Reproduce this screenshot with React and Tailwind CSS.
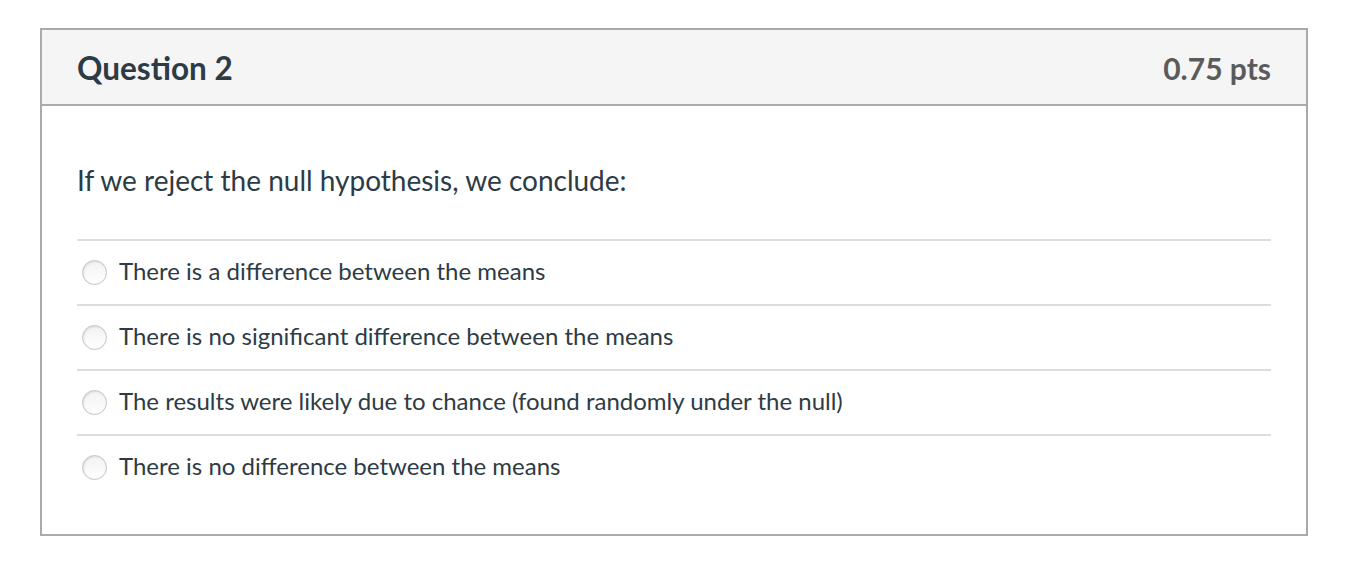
import React from "react"

const answers = [
  "There is a difference between the means",
  "There is no significant difference between the means",
  "The results were likely due to chance (found randomly under the null)",
  "There is no difference between the means",
]

function Radio() {
  return (
    <span className="block w-[25px] h-[25px] rounded-full border border-[#c4c4c4] bg-gradient-to-b from-[#f2f2f2] to-white shadow-[inset_1px_1px_2px_rgba(0,0,0,0.1)] shrink-0" />
  )
}

export default function App() {
  return (
    <div className="min-h-screen bg-white pt-[28px] pl-[40px]" style={{ fontFamily: "Lato, 'Open Sans', sans-serif" }}>
      <div className="w-[1268px] border-2 border-[#aaaaaa]">
        {/* Header */}
        <div className="h-[76px] bg-[#f5f5f5] border-b-2 border-[#aaaaaa] px-[35px] flex items-center justify-between">
          <h2 className="text-[31.5px] font-bold text-[#2d3b45] pt-[3px]">Question 2</h2>
          <span className="text-[30px] font-bold text-[#5b5b5b] pt-[3px]">0.75 pts</span>
        </div>

        {/* Body */}
        <div className="px-[35px] pt-[54px] pb-[35px]">
          <p className="text-[28px] leading-[40px] text-[#2d3b45]">If we reject the null hypothesis, we conclude:</p>
          <div className="mt-[39px]">
            {answers.map((a, i) => (
              <div key={i} className="h-[65px] border-t-2 border-[#dddddd] flex items-center pl-[5px] gap-[12px]">
                <Radio />
                <span className="text-[24px] text-[#2d3b45] -mt-[3px]">{a}</span>
              </div>
            ))}
          </div>
        </div>
      </div>
    </div>
  )
}
